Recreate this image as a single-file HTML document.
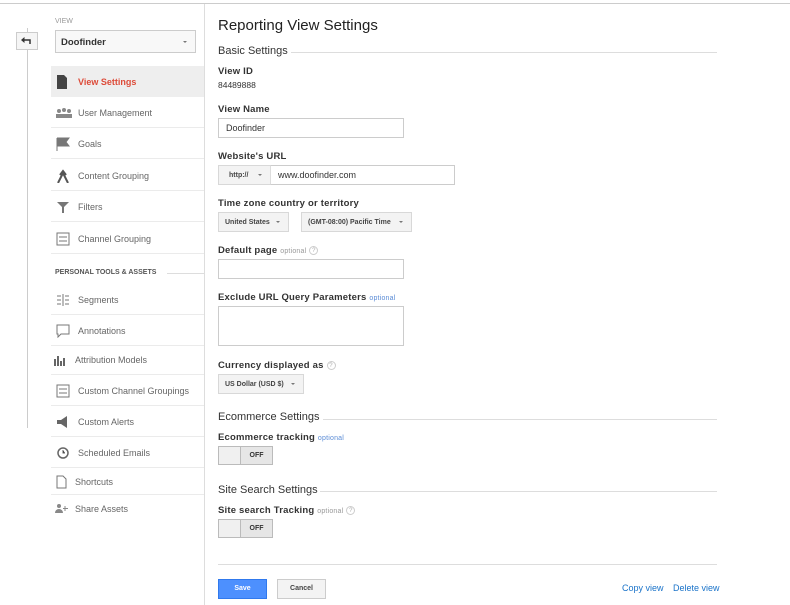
<!DOCTYPE html>
<html><head><meta charset="utf-8"><style>
*{margin:0;padding:0;box-sizing:border-box}
body{width:790px;height:605px;position:relative;background:#fff;font-family:"Liberation Sans",Arial,sans-serif;color:#222;overflow:hidden}
.a{position:absolute;white-space:nowrap}
.nav{position:absolute;left:51px;width:153px;height:31px;border-bottom:1px solid #ebebeb;font-size:9px;color:#666}
.nav span{position:absolute;left:27px;top:11px}
.nav svg{position:absolute;left:5px;top:9px}
.lbl{font-size:9.5px;font-weight:bold;color:#333;letter-spacing:.2px}
.opt{font-size:7px;font-weight:normal;color:#999}
.opt.b{color:#5b8cd6}
.q{display:inline-block;width:9px;height:9px;border:1px solid #ccc;border-radius:50%;font-size:6px;color:#aaa;text-align:center;line-height:8px;font-weight:normal;vertical-align:middle;margin-left:3px}
.inp{position:absolute;border:1px solid #ccc;background:#fff;font-size:9px;color:#333;padding-left:7px;display:flex;align-items:center}
.sel{position:absolute;border:1px solid #d8d8d8;background:#f3f3f3;font-size:7px;font-weight:bold;color:#444;display:flex;align-items:center;padding-left:6px}
.sel:after{content:"";position:absolute;right:8px;top:50%;margin-top:-1px;border-left:2.5px solid transparent;border-right:2.5px solid transparent;border-top:2.5px solid #777}
.sec{position:absolute;left:218px;font-size:11px;color:#333}
.hl{position:absolute;height:1px;background:#ddd}
.tog{position:absolute;left:218px;width:55px;height:19px;border:1px solid #bbb;background:#f0f0f0}
.tog div{position:absolute;left:21px;top:0;right:0;bottom:0;border-left:1px solid #bbb;background:#e6e6e6;font-size:7px;font-weight:bold;color:#333;text-align:center;line-height:17px}
</style></head><body>
<div class="a" style="left:0;top:3px;width:790px;height:1px;background:#ccc"></div>
<div class="a" style="left:204px;top:4px;width:1px;height:601px;background:#ddd"></div>
<div class="a" style="left:27px;top:28px;width:1px;height:400px;background:#ccc"></div>
<div class="a" style="left:16px;top:32px;width:22px;height:18px;border:1px solid #ccc;background:#f5f5f5"><svg width="20" height="16" viewBox="0 0 20 16" style="position:absolute;left:0;top:0"><path d="M7 7h6v4" stroke="#333" stroke-width="1.5" fill="none"/><path d="M4 7l3.5-3v6z" fill="#333"/></svg></div>
<div class="a" style="left:55px;top:18px;font-size:7px;color:#999">VIEW</div>
<div class="a" style="left:55px;top:30px;width:141px;height:23px;border:1px solid #ccc;background:#f8f8f8;font-size:9.5px;font-weight:bold;color:#333;padding:6px 0 0 5px">Doofinder<span style="position:absolute;right:8px;top:10px;border-left:2.5px solid transparent;border-right:2.5px solid transparent;border-top:2.5px solid #777"></span></div>

<div class="nav" style="top:66px;background:#eeeeee;border-bottom:none;color:#dd4b39;font-weight:bold"><svg width="12" height="14"><path d="M1 0h7l3 3v11H1z" fill="#444"/></svg><span>View Settings</span></div>
<div class="nav" style="top:97px"><svg width="16" height="14"><circle cx="3" cy="5" r="2" fill="#888"/><circle cx="8" cy="4" r="2" fill="#888"/><circle cx="13" cy="5" r="2" fill="#888"/><rect x="0" y="8" width="16" height="4" fill="#888"/></svg><span>User Management</span></div>
<div class="nav" style="top:128px"><svg width="14" height="14"><path d="M1 1v13M1 1h12l-3 4 3 4H1" fill="#777" stroke="#777"/></svg><span>Goals</span></div>
<div class="nav" style="top:160px"><svg width="14" height="14"><path d="M2 14l5-10 5 10M4 6l3-4 3 4" stroke="#555" stroke-width="2" fill="none"/></svg><span>Content Grouping</span></div>
<div class="nav" style="top:191px"><svg width="14" height="14"><path d="M1 2h12l-5 5v6H6V7z" fill="#777"/></svg><span>Filters</span></div>
<div class="nav" style="top:223px"><svg width="14" height="14"><rect x="1" y="1" width="12" height="12" fill="none" stroke="#777"/><path d="M3 5h8M3 9h8" stroke="#777"/></svg><span>Channel Grouping</span></div>
<div class="a" style="left:55px;top:269px;font-size:7px;font-weight:bold;color:#555">PERSONAL TOOLS &amp; ASSETS</div>
<div class="a" style="left:167px;top:273px;width:37px;height:1px;background:#ddd"></div>
<div class="nav" style="top:284px"><svg width="14" height="14"><path d="M1 3h4M1 7h4M1 11h4M7 1v12M9 3h4M9 7h4M9 11h4" stroke="#777"/></svg><span>Segments</span></div>
<div class="nav" style="top:315px"><svg width="14" height="14"><path d="M1 1h12v9H5l-3 3v-3H1z" fill="none" stroke="#777"/></svg><span>Annotations</span></div>
<div class="nav" style="top:346px;height:29px"><svg width="14" height="14" style="left:2px;top:7px"><path d="M1 6h2v7H1zM4 3h2v10H4zM7 8h2v5H7zM10 5h2v8h-2z" fill="#666"/></svg><span style="left:24px;top:9px">Attribution Models</span></div>
<div class="nav" style="top:375px"><svg width="14" height="14"><rect x="1" y="1" width="12" height="12" fill="none" stroke="#777"/><path d="M3 5h8M3 9h8" stroke="#777"/></svg><span>Custom Channel Groupings</span></div>
<div class="nav" style="top:406px"><svg width="14" height="14"><path d="M1 5h4l6-4v12l-6-4H1z" fill="#666"/></svg><span>Custom Alerts</span></div>
<div class="nav" style="top:437px"><svg width="14" height="14"><circle cx="7" cy="7" r="5" fill="none" stroke="#666" stroke-width="1.5"/><path d="M7 4v3h2" stroke="#666"/></svg><span>Scheduled Emails</span></div>
<div class="nav" style="top:468px;height:27px"><svg width="12" height="14" style="left:5px;top:7px"><path d="M1 1h6l3 3v9H1z" fill="none" stroke="#777"/></svg><span style="left:24px;top:9px">Shortcuts</span></div>
<div class="nav" style="top:495px;border:none"><svg width="14" height="12" style="left:4px;top:8px"><circle cx="4" cy="3" r="2" fill="#888"/><path d="M0 10a4 4 0 0 1 8 0z" fill="#888"/><path d="M10 3v5M8 5.5h5" stroke="#888"/></svg><span style="left:24px;top:9px">Share Assets</span></div>

<div class="a" style="left:218px;top:17px;font-size:15px;color:#222">Reporting View Settings</div>
<div class="sec" style="top:45px">Basic Settings</div><div class="hl" style="left:291px;top:52px;width:426px"></div>
<div class="a lbl" style="left:218px;top:66px">View ID</div>
<div class="a" style="left:218px;top:80px;font-size:8.5px;color:#333">84489888</div>
<div class="a lbl" style="left:218px;top:104px">View Name</div>
<div class="inp" style="left:218px;top:118px;width:186px;height:20px">Doofinder</div>
<div class="a lbl" style="left:218px;top:151px">Website's URL</div>
<div class="sel" style="left:218px;top:165px;width:53px;height:20px;padding-left:10px">http://</div>
<div class="inp" style="left:270px;top:165px;width:185px;height:20px;border-left:1px solid #ddd">www.doofinder.com</div>
<div class="a lbl" style="left:218px;top:198px">Time zone country or territory</div>
<div class="sel" style="left:218px;top:212px;width:71px;height:20px">United States</div>
<div class="sel" style="left:301px;top:212px;width:111px;height:20px">(GMT-08:00) Pacific Time</div>
<div class="a lbl" style="left:218px;top:245px">Default page <span class="opt">optional</span><span class="q">?</span></div>
<div class="inp" style="left:218px;top:259px;width:186px;height:20px"></div>
<div class="a lbl" style="left:218px;top:292px">Exclude URL Query Parameters <span class="opt b">optional</span></div>
<div class="inp" style="left:218px;top:306px;width:186px;height:40px"></div>
<div class="a lbl" style="left:218px;top:360px">Currency displayed as<span class="q">?</span></div>
<div class="sel" style="left:218px;top:374px;width:86px;height:20px">US Dollar (USD $)</div>
<div class="sec" style="top:411px">Ecommerce Settings</div><div class="hl" style="left:323px;top:419px;width:394px"></div>
<div class="a lbl" style="left:218px;top:432px">Ecommerce tracking <span class="opt b">optional</span></div>
<div class="tog" style="top:446px"><div>OFF</div></div>
<div class="sec" style="top:484px">Site Search Settings</div><div class="hl" style="left:320px;top:491px;width:397px"></div>
<div class="a lbl" style="left:218px;top:505px">Site search Tracking <span class="opt">optional</span><span class="q">?</span></div>
<div class="tog" style="top:519px"><div>OFF</div></div>
<div class="hl" style="left:218px;top:564px;width:499px"></div>
<div class="a" style="left:218px;top:579px;width:49px;height:20px;background:#4d90fe;border:1px solid #3079ed;color:#fff;font-size:7px;font-weight:bold;text-align:center;line-height:18px">Save</div>
<div class="a" style="left:277px;top:579px;width:49px;height:20px;background:#f3f3f3;border:1px solid #ccc;color:#444;font-size:7px;font-weight:bold;text-align:center;line-height:18px">Cancel</div>
<div class="a" style="left:622px;top:583px;font-size:9px;color:#1a73c9">Copy view</div>
<div class="a" style="left:673px;top:583px;font-size:9px;color:#1a73c9">Delete view</div>
</body></html>
